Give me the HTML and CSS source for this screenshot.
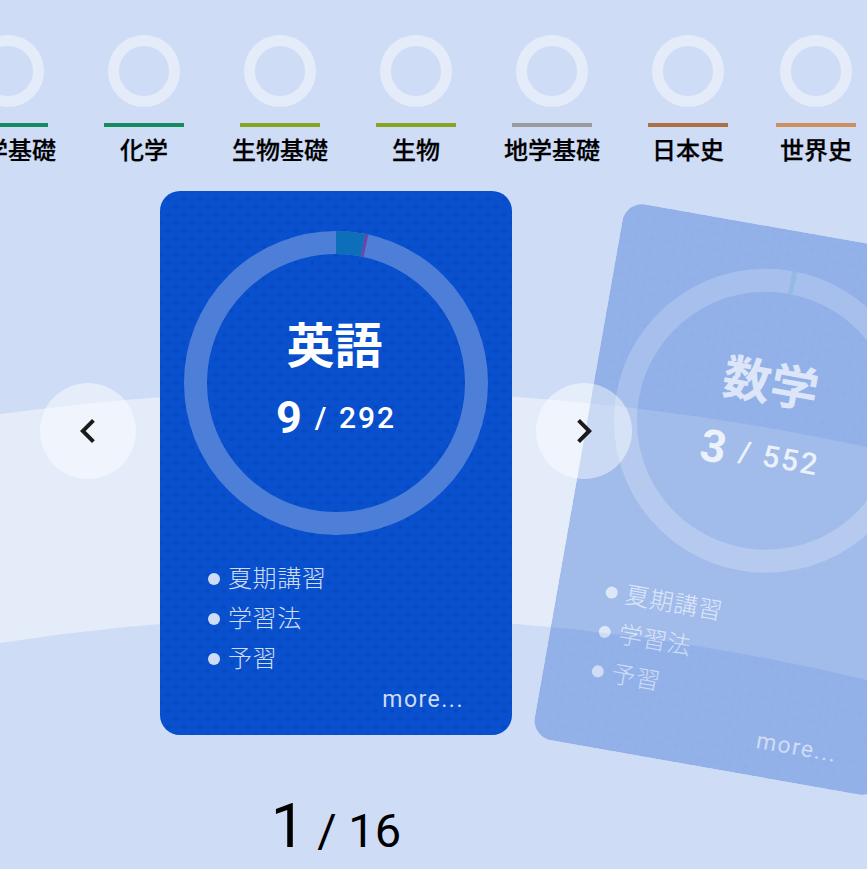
FILE: index.html
```html
<!DOCTYPE html>
<html lang="ja">
<head>
<meta charset="utf-8">
<title>学習記録</title>
<link rel="stylesheet" href="styles.css">
</head>
<body>
<div class="page">
  <svg class="band" width="867" height="869" viewBox="0 0 867 869" aria-hidden="true">
    <path class="band-fill" d="M0 414 Q433.5 354 867 447 L867 680 Q433.5 576 0 643 Z"/>
  </svg>

  <ul class="subjects">
    <li class="subject"><span class="mini-ring"></span><span class="bar green"></span><span class="label">化学基礎</span></li>
    <li class="subject"><span class="mini-ring"></span><span class="bar green"></span><span class="label">化学</span></li>
    <li class="subject"><span class="mini-ring"></span><span class="bar olive"></span><span class="label">生物基礎</span></li>
    <li class="subject"><span class="mini-ring"></span><span class="bar olive"></span><span class="label">生物</span></li>
    <li class="subject"><span class="mini-ring"></span><span class="bar grey"></span><span class="label">地学基礎</span></li>
    <li class="subject"><span class="mini-ring"></span><span class="bar brown"></span><span class="label">日本史</span></li>
    <li class="subject"><span class="mini-ring"></span><span class="bar tan"></span><span class="label">世界史</span></li>
  </ul>

  <div class="carousel">
    <article class="card">
      <div class="ring">
        <svg class="ring-svg" width="304" height="304" viewBox="0 0 304 304" aria-hidden="true">
          <circle class="track" cx="152" cy="152" r="140.5"/>
          <circle class="seg seg-blue" cx="152" cy="152" r="140.5" pathLength="292" stroke-dasharray="9 283" transform="rotate(-90 152 152)"/>
          <circle class="seg seg-purple" cx="152" cy="152" r="140.5" pathLength="292" stroke-dasharray="1 291" stroke-dashoffset="-9" transform="rotate(-90 152 152)"/>
        </svg>
        <h2 class="title">英語</h2>
        <p class="count"><span class="num">9</span><span class="total">/ 292</span></p>
      </div>
      <ul class="topics">
        <li>夏期講習</li>
        <li>学習法</li>
        <li>予習</li>
      </ul>
      <a class="more">more...</a>
    </article>

    <article class="card card-next">
      <div class="ring">
        <svg class="ring-svg" width="304" height="304" viewBox="0 0 304 304" aria-hidden="true">
          <circle class="track" cx="152" cy="152" r="140.5"/>
          <circle class="seg seg-blue" cx="152" cy="152" r="140.5" pathLength="552" stroke-dasharray="3 549" transform="rotate(-90 152 152)"/>
        </svg>
        <h2 class="title">数学</h2>
        <p class="count"><span class="num">3</span><span class="total">/ 552</span></p>
      </div>
      <ul class="topics">
        <li>夏期講習</li>
        <li>学習法</li>
        <li>予習</li>
      </ul>
      <a class="more">more...</a>
    </article>
  </div>

  <button class="nav nav-prev" aria-label="前へ">
    <svg width="48" height="48" viewBox="0 0 24 24"><path d="M15.41 7.41 14 6l-6 6 6 6 1.41-1.41L10.83 12z"/></svg>
  </button>
  <button class="nav nav-next" aria-label="次へ">
    <svg width="48" height="48" viewBox="0 0 24 24"><path d="M10 6 8.59 7.41 13.17 12l-4.58 4.59L10 18l6-6z"/></svg>
  </button>

  <p class="pager"><span class="pager-now">1</span><span class="pager-rest"> / 16</span></p>
</div>
</body>
</html>
```
FILE: styles.css
```css
* { box-sizing: border-box; }
html, body { margin: 0; padding: 0; }
body {
  background: #cfdcf6;
  font-family: Roboto, "Noto Sans CJK JP", sans-serif;
  overflow: hidden;
}
.page {
  position: relative;
  width: 867px;
  height: 869px;
  overflow: hidden;
  padding-top: 35px;
}
.band { position: absolute; left: 0; top: 0; }
.band-fill { fill: #e4ecf9; }

.subjects {
  position: relative;
  display: flex;
  gap: 48px;
  list-style: none;
  margin: 0 0 0 -40px;
  padding: 0;
  width: 1000px;
}
.subject {
  display: flex;
  flex-direction: column;
  align-items: center;
  min-width: 80px;
}
.mini-ring {
  width: 72px;
  height: 72px;
  border: 11px solid #e4ecf9;
  border-radius: 50%;
}
.bar { width: 80px; height: 4px; margin-top: 16px; }
.green { background: #148c60; }
.olive { background: #86a322; }
.grey { background: #9b9b9f; }
.brown { background: #ad7042; }
.tan { background: #cd8e60; }
.label {
  font-family: "Noto Sans CJK JP", sans-serif;
  font-size: 24px;
  font-weight: 500;
  -webkit-text-stroke: 0.25px #000;
  line-height: 44px;
  margin-bottom: 2px;
  color: #000;
  white-space: nowrap;
}

.carousel {
  position: relative;
  display: flex;
  gap: 64px;
  margin-top: 18px;
  padding-left: 160px;
  width: 1200px;
}
.card {
  flex: none;
  width: 352px;
  height: 544px;
  display: flex;
  flex-direction: column;
  padding: 40px 24px 0;
  border-radius: 20px;
  color: #fff;
  background-color: #0950ce;
  background-image:
    radial-gradient(circle, #0a48be 1.8px, transparent 2.3px),
    radial-gradient(circle, #0a48be 1.8px, transparent 2.3px);
  background-size: 16px 16px;
  background-position: -8px -8px, 0 0;
}
.card-next {
  opacity: 0.3;
  transform: translateY(36.5px) rotate(10deg);
}
.ring {
  position: relative;
  width: 304px;
  height: 304px;
  display: flex;
  flex-direction: column;
  align-items: center;
}
.ring-svg { position: absolute; left: 0; top: 0; }
.track { fill: none; stroke: #4d7fd8; stroke-width: 23; }
.seg { fill: none; stroke-width: 23; }
.seg-blue { stroke: #0d6fba; }
.seg-purple { stroke: #6a45a8; }
.title {
  position: relative;
  margin: 76px 3px 0 0;
  font-family: "Noto Sans CJK JP", sans-serif;
  font-size: 48px;
  font-weight: 700;
  line-height: 70px;
}
.count {
  position: relative;
  display: flex;
  align-items: center;
  gap: 13px;
  margin: 11px 0 0;
  height: 60px;
  line-height: 60px;
  white-space: pre;
  word-spacing: 1px;
}
.num { font-size: 45px; font-weight: 700; }
.total { font-size: 30px; font-weight: 500; letter-spacing: 2px; }
.topics {
  list-style: none;
  margin: 22px 0 0;
  padding: 0 0 0 24px;
}
.topics li {
  display: flex;
  align-items: center;
  gap: 8px;
  height: 40px;
  font-family: "Noto Sans CJK JP", sans-serif;
  font-size: 24px;
  font-weight: 300;
  letter-spacing: 0.6px;
  line-height: 36px;
  color: #cfdcf6;
}
.topics li::before {
  content: "";
  width: 12px;
  height: 12px;
  margin-top: 4px;
  border-radius: 50%;
  background: #cfdcf6;
}
.more {
  align-self: flex-end;
  margin: 3px 24px 0 0;
  font-size: 23px;
  line-height: 40px;
  letter-spacing: 1.5px;
  color: #cfdcf6;
}

.nav {
  position: absolute;
  top: 383px;
  width: 96px;
  height: 96px;
  padding: 0;
  border: 0;
  border-radius: 50%;
  background: rgba(255, 255, 255, 0.45);
  display: flex;
  align-items: center;
  justify-content: center;
}
.nav path { fill: #1a1a1a; }
.nav-prev { left: 40px; }
.nav-next { left: 536px; }

.pager {
  position: relative;
  width: 352px;
  margin: 51px 0 0 160px;
  text-align: center;
  line-height: 80px;
  color: #000;
  white-space: pre;
}
.pager-now { font-size: 62px; }
.pager-rest { font-size: 47px; }
```
